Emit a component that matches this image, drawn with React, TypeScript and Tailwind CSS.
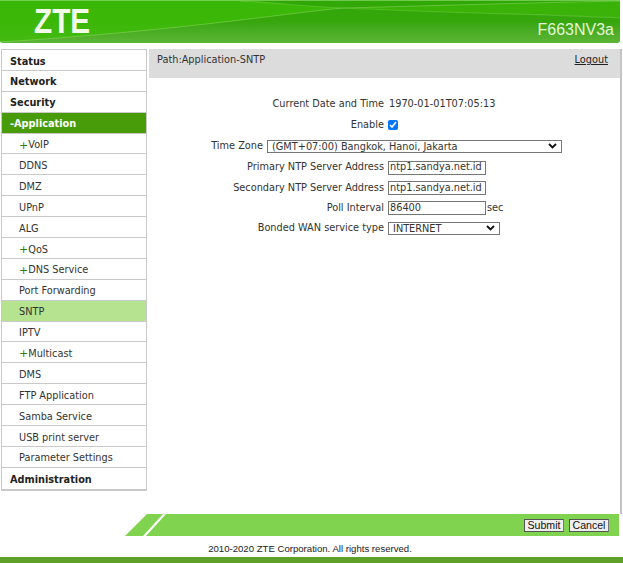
import React from "react";

const vf = { fontFamily: '"DejaVu Sans", Verdana, sans-serif' };
const ar = { fontFamily: '"Liberation Sans", Arial, sans-serif' };

type Item = { label: string; level: 0 | 1; plus?: boolean; state?: "open" | "sel" };
const items: Item[] = [
  { label: "Status", level: 0 },
  { label: "Network", level: 0 },
  { label: "Security", level: 0 },
  { label: "-Application", level: 0, state: "open" },
  { label: "VoIP", level: 1, plus: true },
  { label: "DDNS", level: 1 },
  { label: "DMZ", level: 1 },
  { label: "UPnP", level: 1 },
  { label: "ALG", level: 1 },
  { label: "QoS", level: 1, plus: true },
  { label: "DNS Service", level: 1, plus: true },
  { label: "Port Forwarding", level: 1 },
  { label: "SNTP", level: 1, state: "sel" },
  { label: "IPTV", level: 1 },
  { label: "Multicast", level: 1, plus: true },
  { label: "DMS", level: 1 },
  { label: "FTP Application", level: 1 },
  { label: "Samba Service", level: 1 },
  { label: "USB print server", level: 1 },
  { label: "Parameter Settings", level: 1 },
  { label: "Administration", level: 0 },
];

function NavRow({ item, last }: { item: Item; last: boolean }) {
  const bg =
    item.state === "open"
      ? "bg-[#489c0a] text-white"
      : item.state === "sel"
        ? "bg-[#b5e38f] text-[#333]"
        : item.level === 0
          ? "bg-white text-[#222]"
          : "bg-white text-[#333]";
  return (
    <div
      className={`h-[20.9px] flex items-center pt-[3px] text-[9.75px] leading-none ${bg} ${
        last ? "" : "border-b border-[#c9c9c9]"
      } ${item.level === 0 ? "pl-2 font-bold" : "pl-[17px]"}`}
    >
      {item.plus && <span className="text-[#2d7d10] text-[11px] leading-none font-normal">+</span>}
      {item.label}
    </div>
  );
}

function Label({ children, w = "w-[239px]" }: { children: React.ReactNode; w?: string }) {
  return <div className={`${w} text-right shrink-0 pr-1 text-[#333]`}>{children}</div>;
}

function Field({ value }: { value: string }) {
  return (
    <input
      readOnly
      value={value}
      style={vf}
      className="w-[98px] h-[14px] border border-[#767676] px-[1px] text-[9.75px] text-[#333] bg-white outline-none"
    />
  );
}

function Select({ value, w }: { value: string; w: string }) {
  return (
    <div className={`relative ${w} h-[13px]`}>
      <select
        style={vf}
        className="appearance-none w-full h-full border border-[#767676] bg-white text-[9.75px] leading-[11px] text-[#333] pl-1 outline-none"
      >
        <option>{value}</option>
      </select>
      <svg className="absolute right-[5px] top-[3px]" width="9" height="6" viewBox="0 0 9 6" fill="none">
        <path d="M1 1 L4.5 4.5 L8 1" stroke="#111" strokeWidth="1.8" />
      </svg>
    </div>
  );
}

export default function App() {
  return (
    <div className="w-[623px] h-[563px] bg-white flex flex-col overflow-hidden" style={vf}>
      <header className="relative h-[43px] shrink-0 mr-[3px] rounded-b-[3px] bg-gradient-to-b from-[#2fa806] via-[#36a60c] to-[#5cb535] overflow-hidden">
        <svg className="absolute inset-0" width="620" height="43" viewBox="0 0 620 43">
          <path d="M0 0 H240 C280 3 310 7 345 8 C300 11 190 30 0 42 Z" fill="#3dbb08" fillOpacity="0.8" />
          <path d="M345 8 C420 6 520 3 620 1 V18 C540 14 440 13 345 8 Z" fill="#3cb509" fillOpacity="0.8" />
          <path d="M0 42 C190 30 300 11 345 8 C420 6 520 3 620 1" stroke="#b8ec90" strokeOpacity="0.35" strokeWidth="1" fill="none" />
          <path d="M240 1 C280 3 310 7 345 8 C440 13 540 14 620 18" stroke="#b8ec90" strokeOpacity="0.22" strokeWidth="1.2" fill="none" />
          <path d="M0 0.5 H620" stroke="#8ad96a" strokeOpacity="0.7" strokeWidth="1" />
        </svg>
        <span
          className="absolute left-[34px] top-[1px] text-[#f2fbe9] text-[35px] leading-[40px] font-bold origin-left scale-x-[0.85]"
          style={ar}
        >
          ZTE
        </span>
        <span
          className="absolute right-[6px] top-[21px] text-[#e4f5d8] text-[16px] leading-[18px]"
          style={ar}
        >
          F663NV3a
        </span>
      </header>

      <div className="flex flex-1 pt-[6px] pl-[1px] pr-[1px]">
        <nav className="w-[146px] self-start shrink-0 border-x border-t border-b-2 border-[#c9c9c9] box-border">
          {items.map((it, i) => (
            <NavRow key={it.label} item={it} last={i === items.length - 1} />
          ))}
        </nav>

        <main className="flex-1 ml-[2px] border-r-2 border-[#c4c4c4] flex flex-col text-[9.75px]">
          <div className="h-[29px] shrink-0 bg-[#dcdcdc] flex justify-between pt-[4px] pl-2 pr-[12px] leading-[14px] text-[#333]">
            <span>Path:Application-SNTP</span>
            <span className="underline text-[#222]">Logout</span>
          </div>
          <form className="flex flex-col pt-[16px]">
            <div className="h-[21px] flex items-center">
              <Label>Current Date and Time</Label>
              <span className="ml-[1px] text-[#333]">1970-01-01T07:05:13</span>
            </div>
            <div className="h-[21px] flex items-center">
              <Label>Enable</Label>
              <input readOnly type="checkbox" checked className="w-[10px] h-[10px] accent-[#0075ff] -mt-[2px]" />
            </div>
            <div className="h-[21px] flex items-center">
              <Label w="w-[118px]">Time Zone</Label>
              <Select w="w-[295px]" value="(GMT+07:00) Bangkok, Hanoi, Jakarta" />
            </div>
            <div className="h-[21px] flex items-center">
              <Label>Primary NTP Server Address</Label>
              <Field value="ntp1.sandya.net.id" />
            </div>
            <div className="h-[20px] flex items-center">
              <Label>Secondary NTP Server Address</Label>
              <Field value="ntp1.sandya.net.id" />
            </div>
            <div className="h-[20px] flex items-center">
              <Label>Poll Interval</Label>
              <Field value="86400" />
              <span className="ml-[1px] text-[#333]">sec</span>
            </div>
            <div className="h-[21px] flex items-center">
              <Label>Bonded WAN service type</Label>
              <Select w="w-[112px]" value="INTERNET" />
            </div>
          </form>
        </main>
      </div>

      <div className="relative h-[22px] shrink-0 ml-[125px] mr-[4px] flex items-center justify-end gap-[5px] pr-[10px] bg-[#7fd34e]">
        <svg className="absolute left-0 top-0" width="42" height="22" viewBox="0 0 42 22">
          <path d="M0 22 V0 H22 Z" fill="#fff" />
          <path d="M18 22 L38 0 H41 L21 22 Z" fill="#fff" />
        </svg>
        {["Submit", "Cancel"].map((b) => (
          <button
            key={b}
            type="button"
            className="w-[40px] h-[13px] bg-[#efefef] border border-[#555] border-r-[#777] text-[10.6px] leading-[11px] text-[#111]"
            style={ar}
          >
            {b}
          </button>
        ))}
      </div>

      <div className="h-[21px] shrink-0 flex items-center justify-center text-[9.6px] text-[#222] pt-[6px] pr-[3px]" style={ar}>
        2010-2020 ZTE Corporation. All rights reserved.
      </div>
      <div className="h-[6px] shrink-0 bg-[#5fa028]" />
    </div>
  );
}
